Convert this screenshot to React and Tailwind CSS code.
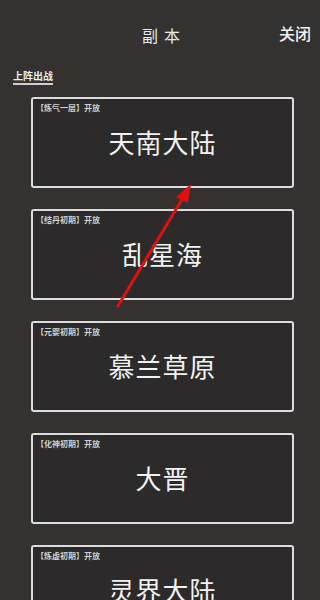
const FONT = { fontFamily: '"Noto Sans CJK SC", "Noto Sans", sans-serif' }

const REALMS = [
  { tag: '【炼气一层】开放', name: '天南大陆' },
  { tag: '【结丹初期】开放', name: '乱星海' },
  { tag: '【元婴初期】开放', name: '慕兰草原' },
  { tag: '【化神初期】开放', name: '大晋' },
  { tag: '【炼虚初期】开放', name: '灵界大陆' },
]

const RealmCard = ({ tag, name }) => (
  <div className="h-[91px] w-[263px] rounded-[3px] border-2 border-[#dcdcdc] bg-[#2c2a2a] flex flex-col">
    <p className="pl-[3px] pt-[4px] text-[8px] leading-[10px] text-[#d0d0d0] font-bold">{tag}</p>
    <p className="flex-1 flex items-center justify-center pb-[16px] text-[26px] leading-none text-[#f2f2f2] tracking-[1px]">
      {name}
    </p>
  </div>
)

export default function App() {
  return (
    <div className="relative h-[600px] w-[320px] overflow-hidden bg-[#343131]" style={FONT}>
      {/* Header */}
      <div className="relative h-[50px]">
        <span className="absolute left-[142px] top-[25px] text-[16px] leading-[20px] text-[#e8e8e8] tracking-[6px]">副本</span>
        <span className="absolute right-[9px] top-[23px] text-[16px] leading-[20px] font-medium text-[#f0f0f0]">关闭</span>
      </div>

      <div className="pl-[13px] pt-[11px]">
        <span className="inline-block border-b-2 border-[#cfcfcf] pb-[1px] text-[10px] leading-[13px] font-bold text-[#eeeeee]">
          上阵出战
        </span>
      </div>

      <div className="mt-[12px] ml-[31px] flex flex-col gap-[21px]">
        {REALMS.map((r) => (
          <RealmCard key={r.name} {...r} />
        ))}
      </div>

      {/* annotation arrow */}
      <svg className="absolute left-0 top-0 pointer-events-none" width="320" height="600">
        <line x1="118" y1="306" x2="184" y2="196" stroke="#e01010" strokeWidth="3" strokeLinecap="round" />
        <polygon points="191,184 176,197 188,203" fill="#e01010" />
      </svg>
    </div>
  )
}
